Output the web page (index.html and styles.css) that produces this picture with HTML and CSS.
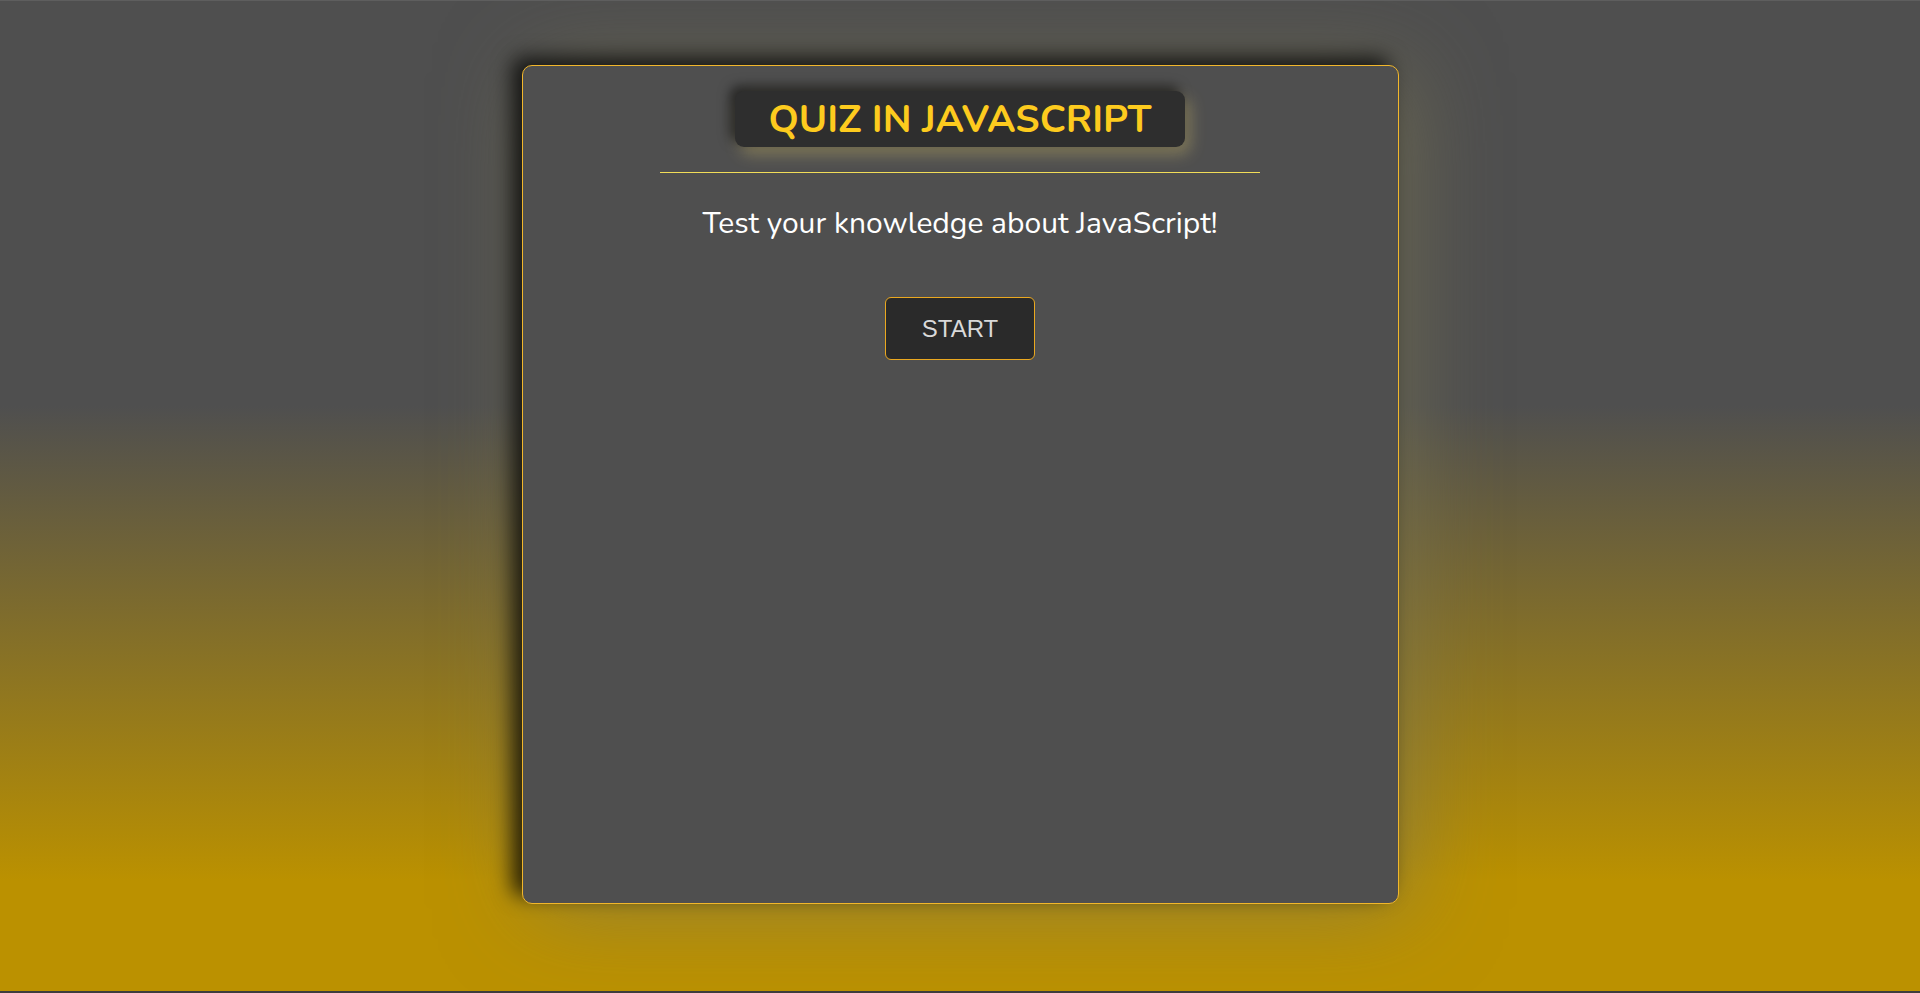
FILE: index.html
```html
<!DOCTYPE html>
<html lang="en">
<head>
<meta charset="utf-8">
<title>Quiz in JavaScript</title>
<link rel="stylesheet" href="styles.css">
</head>
<body>
  <main class="card">
    <h1 class="title">QUIZ IN JAVASCRIPT</h1>
    <div class="rule"></div>
    <p class="subtitle">Test your knowledge about JavaScript!</p>
    <button class="start-btn" type="button">START</button>
  </main>
</body>
</html>
```

FILE: styles.css
```css
html {
  background: #3d3d3d;
}

body {
  margin: 0;
  min-height: 993px;
  box-sizing: border-box;
  border-top: 1px solid #5e5e5e;
  border-bottom: 2px solid #3d3d3d;
  padding-top: 64px;
  background: linear-gradient(to bottom, #4f4f4f 405px, #bb9100 880px);
  font-family: "Nunito", "Lato", "Noto Sans", sans-serif;
}

.card {
  box-sizing: border-box;
  width: 877px;
  height: 839px;
  margin: 0 auto;
  padding-top: 25px;
  background: #4f4f4f;
  border: 1px solid #f2b72b;
  border-radius: 10px;
  box-shadow: -10px -8px 20px rgba(0, 0, 0, 0.75), 10px 6px 90px rgba(125, 120, 85, 0.65);
  display: flex;
  flex-direction: column;
  align-items: center;
}

.title {
  margin: 0;
  width: 450px;
  height: 56px;
  display: flex;
  align-items: center;
  justify-content: center;
  background: #2e2e2e;
  border-radius: 9px;
  color: #fdcb1e;
  font-size: 38.5px;
  font-weight: 700;
  letter-spacing: 0;
  box-shadow: -5px -5px 12px rgba(0, 0, 0, 0.55), 5px 7px 16px rgba(255, 230, 120, 0.3);
}

.rule {
  width: 600px;
  height: 1px;
  margin-top: 25px;
  background: #f2dd58;
}

.subtitle {
  margin: 33px 0 0;
  font-size: 30px;
  line-height: 1.2;
  color: #ffffff;
}

.start-btn {
  margin-top: 55px;
  width: 150px;
  height: 63px;
  background: #2a2a2a;
  border: 1px solid #eaa820;
  border-radius: 6px;
  color: #d9d9d9;
  font-family: "Liberation Sans", Arial, sans-serif;
  font-size: 24px;
  padding: 0;
  cursor: pointer;
}
```
